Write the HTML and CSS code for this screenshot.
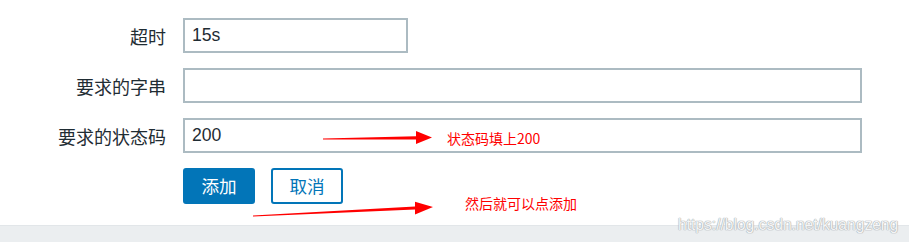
FILE: index.html
```html
<!DOCTYPE html>
<html lang="zh">
<head>
<meta charset="utf-8">
<title>Form</title>
<link rel="stylesheet" href="styles.css">
</head>
<body>
<div class="page">
  <div class="form">
    <label class="label">超时</label>
    <div class="field short">15s</div>
    <label class="label">要求的字串</label>
    <div class="field long"></div>
    <label class="label">要求的状态码</label>
    <div class="field long">200</div>
    <div></div>
    <div class="buttons">
      <button class="btn primary">添加</button>
      <button class="btn secondary">取消</button>
    </div>
  </div>
  <div class="bar"></div>

  <svg class="arrows" width="909" height="242" viewBox="0 0 909 242">
    <polygon fill="#ff0000" points="323,138.6 416,136.2 416,131 432,137.5 416,144 416,139.6 323,139.5"/>
    <polygon fill="#ff0000" points="253,215.5 415,206.5 415,201.8 433,207 415,214.6 415,209.5 253,216.6"/>
  </svg>
  <span class="note note1">状态码填上200</span>
  <span class="note note2">然后就可以点添加</span>
  <span class="watermark">https://blog.csdn.net/kuangzeng</span>
</div>
</body>
</html>
```
FILE: styles.css
```css
html, body {
  margin: 0;
  padding: 0;
  background: #ffffff;
}
.page {
  position: relative;
  width: 909px;
  height: 242px;
  display: flex;
  flex-direction: column;
  overflow: hidden;
  font-family: "Liberation Sans", "Noto Sans CJK SC", sans-serif;
  color: #1f2c33;
}
.form {
  display: grid;
  grid-template-columns: 166px auto;
  column-gap: 17px;
  row-gap: 15px;
  padding-top: 18px;
  align-items: center;
}
.label {
  text-align: right;
  font-size: 18px;
  line-height: 20px;
  font-family: "Noto Sans CJK SC", sans-serif;
}
.field {
  box-sizing: border-box;
  height: 35px;
  border: 2px solid #acbbc2;
  padding: 0 7px;
  font-size: 17.6px;
  line-height: 31px;
  background: #fff;
}
.field.short { width: 225px; }
.field.long { width: 679px; }
.buttons {
  display: flex;
  gap: 16px;
}
.btn {
  box-sizing: border-box;
  width: 72px;
  height: 36px;
  border-radius: 3px;
  font-family: "Noto Sans CJK SC", sans-serif;
  font-size: 17.6px;
  line-height: 20px;
  padding: 0;
  cursor: pointer;
}
.btn.primary {
  background: #0275b8;
  border: 2px solid #0275b8;
  color: #ffffff;
}
.btn.secondary {
  background: #ffffff;
  border: 2px solid #0275b8;
  color: #0275b8;
}
.bar {
  margin-top: 21px;
  flex: 1;
  background: #ebeef0;
  border-top: 1px solid #e2e6e9;
}
.arrows {
  position: absolute;
  left: 0;
  top: 0;
}
.note {
  position: absolute;
  color: #ff0000;
  font-family: "Noto Sans CJK SC", sans-serif;
  font-size: 14px;
  line-height: 14px;
  white-space: nowrap;
}
.note1 { left: 447px; top: 131px; }
.note2 { left: 465px; top: 196px; }
.watermark {
  position: absolute;
  left: 678px;
  top: 216px;
  font-family: "Liberation Sans", sans-serif;
  font-size: 15.6px;
  line-height: 18px;
  color: #f4f5f6;
  text-shadow: 0 0 1px #a9aeb2, 0 0 1px #a9aeb2, 0 0 1px #a9aeb2;
  white-space: nowrap;
}
```
